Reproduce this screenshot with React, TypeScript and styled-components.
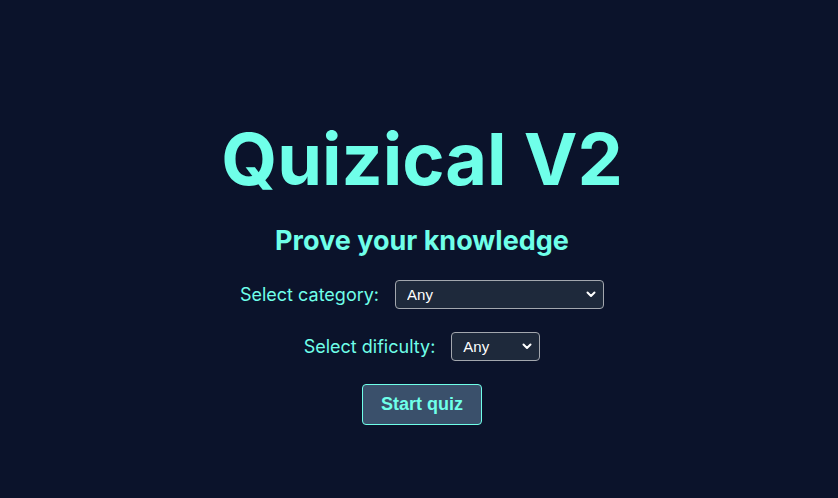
import React from "react";
import styled, { createGlobalStyle } from "styled-components";

const Global = createGlobalStyle`
  html, body { margin: 0; padding: 0; background: #0b132b; }
  body { font-family: Inter, "Noto Sans", sans-serif; }
`;

const Page = styled.main`
  min-height: 498px;
  box-sizing: border-box;
  padding: 115px 0 0 6px;
  display: flex;
  flex-direction: column;
  align-items: center;
  background: #0b132b;
  color: #6fffe9;
`;

const Title = styled.h1`
  margin: 0;
  font-family: Inter, sans-serif;
  font-size: 72px;
  font-weight: 700;
  line-height: 88px;
  letter-spacing: 0;
`;

const Subtitle = styled.h2`
  margin: 22px 0 0;
  font-family: Inter, sans-serif;
  font-size: 27px;
  font-weight: 700;
  line-height: 32px;
`;

const Row = styled.div<{ $top: number }>`
  display: flex;
  align-items: center;
  gap: 16px;
  margin-top: ${(p) => p.$top}px;
`;

const Label = styled.label`
  font-family: Inter, sans-serif;
  font-size: 18px;
  font-weight: 400;
  color: #6fffe9;
`;

const SelectWrap = styled.div<{ $w: number }>`
  position: relative;
  width: ${(p) => p.$w}px;
  height: 29px;
`;

const Select = styled.select`
  appearance: none;
  width: 100%;
  height: 100%;
  box-sizing: border-box;
  padding: 0 24px 0 11px;
  background: #1e293b;
  color: #ffffff;
  border: 1px solid #a3a7ae;
  border-radius: 4px;
  font-family: "Liberation Sans", Arial, sans-serif;
  font-size: 15px;
  outline: none;
`;

const Chevron = styled.svg`
  position: absolute;
  right: 8px;
  top: 11px;
  width: 10px;
  height: 7px;
  pointer-events: none;
`;

const Button = styled.button`
  margin-top: 23px;
  width: 120px;
  height: 41px;
  box-sizing: border-box;
  background: #3a506b;
  color: #6fffe9;
  border: 1px solid #6fffe9;
  border-radius: 4px;
  font-family: "Liberation Sans", Arial, sans-serif;
  font-size: 18px;
  font-weight: 700;
  cursor: pointer;
`;

function Dropdown({ id, width }: { id: string; width: number }) {
  return (
    <SelectWrap $w={width}>
      <Select id={id} defaultValue="any">
        <option value="any">Any</option>
      </Select>
      <Chevron viewBox="0 0 10 7">
        <polyline
          points="1.5,1.5 5,5 8.5,1.5"
          fill="none"
          stroke="#ffffff"
          strokeWidth="2"
          strokeLinecap="round"
          strokeLinejoin="round"
        />
      </Chevron>
    </SelectWrap>
  );
}

export default function App() {
  return (
    <>
      <Global />
      <Page>
        <Title>Quizical V2</Title>
        <Subtitle>Prove your knowledge</Subtitle>
        <Row $top={23}>
          <Label htmlFor="cat">Select category:</Label>
          <Dropdown id="cat" width={209} />
        </Row>
        <Row $top={23}>
          <Label htmlFor="diff">Select dificulty:</Label>
          <Dropdown id="diff" width={89} />
        </Row>
        <Button>Start quiz</Button>
      </Page>
    </>
  );
}
